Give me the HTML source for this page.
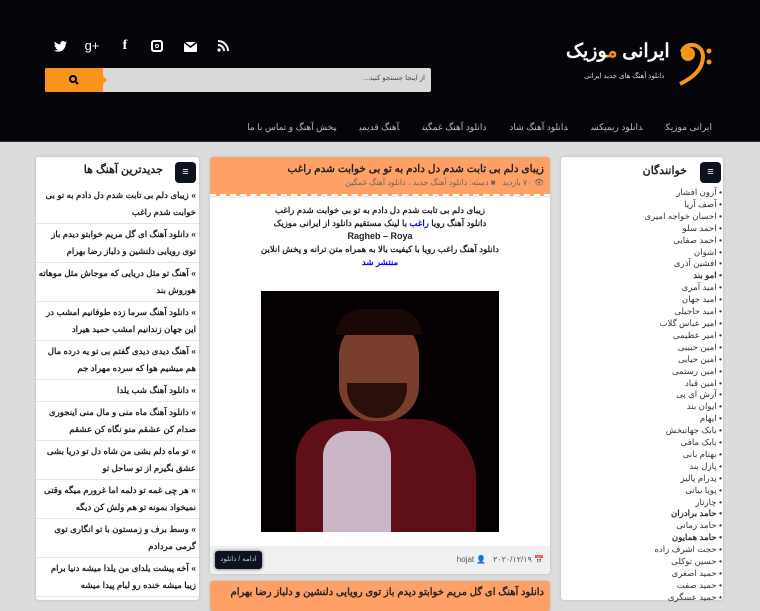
<!DOCTYPE html>
<html><head><meta charset="utf-8"><style>
*{margin:0;padding:0;box-sizing:border-box}
body{width:760px;height:600px;overflow:hidden;background:#dcdcdc;font-family:"Liberation Sans","Noto Sans CJK SC",sans-serif;position:relative}
.a{position:absolute}
.hdr{left:0;top:0;width:760px;height:142px;background:#040409;border-bottom:1px solid #333}
.soc{top:38px;width:26px;height:20px;color:#fff;font-size:14px;text-align:center;font-weight:bold}
.search{left:45px;top:68px;width:386px;height:24px;background:#dad8d9;border-radius:2px}
.search .btn{position:absolute;left:0;top:0;width:58px;height:24px;background:#f7941d;border-radius:2px 0 0 2px}
.search .ph{position:absolute;right:6px;top:6px;font-size:7px;color:#444;direction:rtl}
.nav{top:122px;right:48px;direction:rtl;font-size:9px;color:#bbb;white-space:nowrap}
.nav span{margin-left:23px}
.box{background:#fff;border-radius:3px;box-shadow:0 0 3px rgba(0,0,0,.15)}
.ic{width:21px;height:21px;background:#0c1220;border-radius:4px;color:#fff;font-size:11px;text-align:center;line-height:21px}
.ll{direction:rtl;font-size:8.6px;font-weight:bold;color:#222;line-height:17px;padding:2px 3px 2px 2px;border-bottom:1px solid #e6e6e6}
.rl{direction:rtl;font-size:8.6px;color:#333;line-height:11.9px;text-align:right}
.rl div{white-space:nowrap}
</style></head><body>
<div class="a hdr"></div>
<svg class="a" style="left:54px;top:41px" width="13" height="11" viewBox="0 0 24 20"><path d="M24 2.4a10 10 0 0 1-2.8.8A5 5 0 0 0 23.3.4a10 10 0 0 1-3.1 1.2A4.9 4.9 0 0 0 11.8 6 14 14 0 0 1 1.7.9a4.9 4.9 0 0 0 1.5 6.6A5 5 0 0 1 1 6.9a4.9 4.9 0 0 0 3.9 4.8 5 5 0 0 1-2.2.1 4.9 4.9 0 0 0 4.6 3.4A9.9 9.9 0 0 1 0 17.3 14 14 0 0 0 7.5 19.5c9.1 0 14-7.5 14-14v-.6A10 10 0 0 0 24 2.4z" fill="#fff"/></svg>
<div class="a soc" style="left:79px;font-weight:normal;font-size:13px">g+</div>
<div class="a soc" style="left:112px;font-family:'Liberation Serif'">f</div>
<div class="a" style="left:151px;top:40px;width:12px;height:12px;border:2px solid #fff;border-radius:3px"></div>
<div class="a" style="left:155px;top:44px;width:4px;height:4px;border:1.5px solid #fff;border-radius:50%"></div>
<div class="a" style="left:184px;top:42px;width:13px;height:10px;background:#fff;border-radius:1px"></div>
<svg class="a" style="left:184px;top:42px" width="13" height="6"><path d="M0 0L6.5 5L13 0" stroke="#000" stroke-width="1.5" fill="none"/></svg>
<svg class="a" style="left:217px;top:40px" width="12" height="12"><circle cx="2" cy="10" r="1.6" fill="#fff"/><path d="M1 5a6 6 0 0 1 6 6M1 1a10 10 0 0 1 10 10" stroke="#fff" stroke-width="2" fill="none"/></svg>
<div class="a search"><div class="btn"><svg style="position:absolute;left:24px;top:7px" width="10" height="10"><circle cx="4" cy="4" r="3" stroke="#000" stroke-width="2" fill="none"/><path d="M6 6l3 3" stroke="#000" stroke-width="2"/></svg></div>
<div style="position:absolute;left:58px;top:8px;border-left:4px solid #f7941d;border-top:4px solid transparent;border-bottom:4px solid transparent"></div>
<div class="ph">از اینجا جستجو کنید...</div></div>
<div class="a" style="left:566px;top:40px;font-size:19px;color:#fff;font-weight:bold;direction:rtl;white-space:nowrap;font-family:'Liberation Serif','Noto Serif CJK SC',serif">ایرانی <span style="color:#f7941d">م</span>وزیک</div>
<div class="a" style="left:584px;top:72px;font-size:7px;color:#ddd;direction:rtl">دانلود آهنگ های جدید ایرانی</div>
<svg class="a" style="left:678px;top:42px" width="36" height="44"><circle cx="10" cy="12" r="7" fill="#f7941d"/><path d="M4 10C6 0 24 0 25 14C25 28 14 36 2 42" stroke="#f7941d" stroke-width="4" fill="none"/><circle cx="31" cy="9" r="2.5" fill="#f7941d"/><circle cx="31" cy="20" r="2.5" fill="#f7941d"/></svg>
<div class="a nav"><span>ایرانی موزیک</span><span>دانلود ریمیکس</span><span>دانلود آهنگ شاد</span><span>دانلود آهنگ غمگین</span><span>آهنگ قدیمی</span><span>پخش آهنگ و تماس با ما</span></div>

<!-- left -->
<div class="a box" style="left:36px;top:157px;width:163px;height:443px;overflow:hidden">
<div class="a ic" style="left:139px;top:5px">&#8801;</div>
<div class="a" style="right:36px;top:6px;font-size:11px;font-weight:bold;color:#222;direction:rtl">جدیدترین آهنگ ها</div>
<div style="position:absolute;top:28px;left:0;width:163px">
<div class="ll">» زیبای دلم بی تابت شدم دل دادم به تو بی خوابت شدم راغب</div>
<div class="ll">» دانلود آهنگ ای گل مریم خوابتو دیدم باز توی رویایی دلنشین و دلباز رضا بهرام</div>
<div class="ll">» آهنگ تو مثل دریایی که موجاش مثل موهاته هوروش بند</div>
<div class="ll">» دانلود آهنگ سرما زده طوفانیم امشب در این جهان زندانیم امشب حمید هیراد</div>
<div class="ll">» آهنگ دیدی دیدی گفتم بی تو یه درده مال هم میشیم هوا که سرده مهراد جم</div>
<div class="ll">» دانلود آهنگ شب یلدا</div>
<div class="ll">» دانلود آهنگ ماه منی و مال منی اینجوری صدام کن عشقم منو نگاه کن عشقم</div>
<div class="ll">» تو ماه دلم بشی من شاه دل تو دریا بشی عشق بگیرم از تو ساحل تو</div>
<div class="ll">» هر چی غمه تو دلمه اما غرورم میگه وقتی نمیخواد بمونه تو هم ولش کن دیگه</div>
<div class="ll">» وسط برف و زمستون با تو انگاری توی گرمی مردادم</div>
<div class="ll">» آخه پیشت یلدای من یلدا میشه دنیا برام زیبا میشه خنده رو لبام پیدا میشه</div>
<div class="ll">» آهنگ موهاتو بافتم بهت نگفتم بی تو میمیرم از یا میافتم محسن یاحقی</div>
</div></div>

<!-- center -->
<div class="a box" style="left:210px;top:157px;width:340px;height:417px;overflow:hidden;background:#f0f0f0">
<div style="position:absolute;left:0;top:0;width:340px;height:39px;background:#ffa066;border-bottom:2px dashed #fff"></div>
<div class="a" style="right:6px;top:6px;font-size:10.5px;font-weight:bold;color:#222;direction:rtl;white-space:nowrap">زیبای دلم بی تابت شدم دل دادم به تو بی خوابت شدم راغب</div>
<div class="a" style="right:6px;top:21px;font-size:8px;color:#666;direction:rtl;white-space:nowrap">&#128065; ۷۰ بازدید &nbsp; &#9632; دسته: دانلود آهنگ جدید ، دانلود آهنگ غمگین</div>
<div style="position:absolute;left:0;top:41px;width:340px;height:348px;background:#fff"></div>
<div class="a" style="left:0;top:47px;width:340px;text-align:center;direction:rtl;font-size:8.6px;font-weight:bold;color:#222;line-height:13px">زیبای دلم بی تابت شدم دل دادم به تو بی خوابت شدم راغب<br>دانلود آهنگ رویا <span style="color:#00f">راغب</span> با لینک مستقیم دانلود از ایرانی موزیک<br><span style="font-size:9px">Ragheb – Roya</span><br>دانلود آهنگ راغب رویا با کیفیت بالا به همراه متن ترانه و پخش انلاین<br><span style="color:#00f">منتشر شد</span></div>
<div class="a" style="left:51px;top:134px;width:238px;height:241px;background:#050102;overflow:hidden">
<div class="a" style="left:35px;top:128px;width:180px;height:130px;background:#5e0f18;border-radius:40px 60px 0 0"></div>
<div class="a" style="left:62px;top:140px;width:68px;height:110px;background:#c9b6c6;border-radius:25px 25px 0 0"></div>
<div class="a" style="left:78px;top:25px;width:80px;height:105px;background:#7a3e2c;border-radius:40px 40px 35px 35px"></div>
<div class="a" style="left:86px;top:92px;width:60px;height:35px;background:#2a100a;border-radius:0 0 30px 30px"></div>
<div class="a" style="left:75px;top:18px;width:86px;height:26px;background:#1a0806;border-radius:40px 40px 0 0"></div>
</div>
<div class="a" style="left:5px;top:394px;width:47px;height:18px;background:#0c1220;border-radius:3px;color:#ccc;font-size:7px;text-align:center;line-height:18px;box-shadow:0 0 3px #555">ادامه / دانلود</div>
<div class="a" style="right:6px;top:398px;font-size:8px;color:#555;white-space:nowrap">hojat &#128100; &nbsp; ۲۰۲۰/۱۲/۱۹ &#128197;</div>
</div>
<div class="a box" style="left:210px;top:581px;width:340px;height:30px;background:#ffa066">
<div class="a" style="right:6px;top:6px;font-size:10px;font-weight:bold;color:#222;direction:rtl;white-space:nowrap">دانلود آهنگ ای گل مریم خوابتو دیدم باز توی رویایی دلنشین و دلباز رضا بهرام</div></div>

<!-- right -->
<div class="a box" style="left:561px;top:157px;width:162px;height:443px">
<div class="a ic" style="left:139px;top:5px">&#8801;</div>
<div class="a" style="right:36px;top:7px;font-size:11px;font-weight:bold;color:#222;direction:rtl">خوانندگان</div>
<div class="a rl" style="right:1px;top:30px">
<div>• آرون افشار</div><div>• آصف آریا</div><div>• احسان خواجه امیری</div><div>• احمد سلو</div><div>• احمد صفایی</div><div>• اشوان</div><div>• افشین آذری</div><div><b>• امو بند</b></div><div>• امید آمری</div><div>• امید جهان</div><div>• امید حاجیلی</div><div>• امیر عباس گلاب</div><div>• امیر عظیمی</div><div>• امین حبیبی</div><div>• امین حیایی</div><div>• امین رستمی</div><div>• امین قباد</div><div>• آرش ای پی</div><div>• ایوان بند</div><div>• ایهام</div><div>• بابک جهانبخش</div><div>• بابک مافی</div><div>• بهنام بانی</div><div>• پازل بند</div><div>• پدرام پالیز</div><div>• پویا بیاتی</div><div>• چارتار</div><div><b>• حامد برادران</b></div><div>• حامد زمانی</div><div><b>• حامد همایون</b></div><div>• حجت اشرف زاده</div><div>• حسین توکلی</div><div>• حمید اصغری</div><div>• حمید صفت</div><div>• حمید عسگری</div>
</div></div>
</body></html>
